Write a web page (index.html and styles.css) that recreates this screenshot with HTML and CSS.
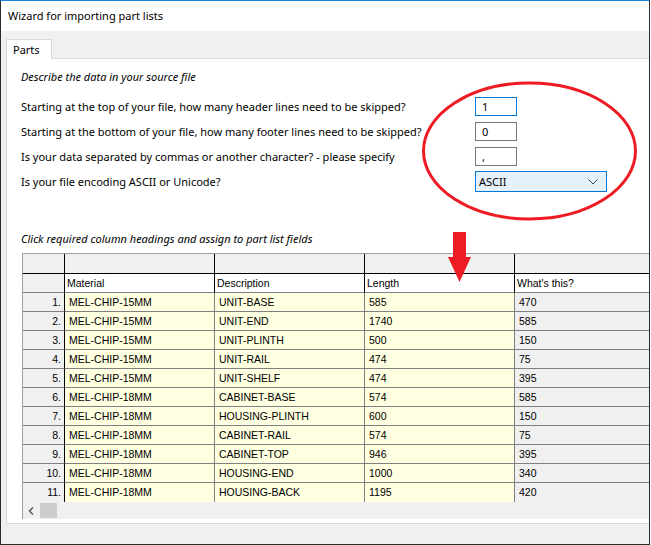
FILE: index.html
```html
<!DOCTYPE html>
<html>
<head>
<meta charset="utf-8">
<title>Wizard for importing part lists</title>
<link rel="stylesheet" href="styles.css">
</head>
<body>
<div class="window">
  <div class="titlebar">Wizard for importing part lists</div>
  <div class="client">
    <div class="tabs"><div class="tab">Parts</div></div>
    <div class="panel">
      <div class="section-title">Describe the data in your source file</div>
      <div class="form">
        <div class="label">Starting at the top of your file, how many header lines need to be skipped?</div>
        <div class="field"><div class="textbox focused">1</div></div>
        <div class="label">Starting at the bottom of your file, how many footer lines need to be skipped?</div>
        <div class="field"><div class="textbox">0</div></div>
        <div class="label">Is your data separated by commas or another character? - please specify</div>
        <div class="field"><div class="textbox">,</div></div>
        <div class="label">Is your file encoding ASCII or Unicode?</div>
        <div class="field">
          <div class="select">ASCII
            <svg class="chevron" width="10" height="6" viewBox="0 0 10 6"><polyline points="0.5,0.5 5,5 9.5,0.5" fill="none" stroke="#444" stroke-width="1"/></svg>
          </div>
        </div>
      </div>
      <div class="section-title hint">Click required column headings and assign to part list fields</div>
      <div class="gridview">
        <div class="grid">
          <div class="c rh h1"></div><div class="c h1"></div><div class="c h1"></div><div class="c h1"></div><div class="c h1"></div>
          <div class="c rh h2"></div><div class="c h2">Material</div><div class="c h2">Description</div><div class="c h2">Length</div><div class="c h2">What's this?</div>

          <div class="c rh">1.</div><div class="c y">MEL-CHIP-15MM</div><div class="c y">UNIT-BASE</div><div class="c y">585</div><div class="c g">470</div>
          <div class="c rh">2.</div><div class="c y">MEL-CHIP-15MM</div><div class="c y">UNIT-END</div><div class="c y">1740</div><div class="c g">585</div>
          <div class="c rh">3.</div><div class="c y">MEL-CHIP-15MM</div><div class="c y">UNIT-PLINTH</div><div class="c y">500</div><div class="c g">150</div>
          <div class="c rh">4.</div><div class="c y">MEL-CHIP-15MM</div><div class="c y">UNIT-RAIL</div><div class="c y">474</div><div class="c g">75</div>
          <div class="c rh">5.</div><div class="c y">MEL-CHIP-15MM</div><div class="c y">UNIT-SHELF</div><div class="c y">474</div><div class="c g">395</div>
          <div class="c rh">6.</div><div class="c y">MEL-CHIP-18MM</div><div class="c y">CABINET-BASE</div><div class="c y">574</div><div class="c g">585</div>
          <div class="c rh">7.</div><div class="c y">MEL-CHIP-18MM</div><div class="c y">HOUSING-PLINTH</div><div class="c y">600</div><div class="c g">150</div>
          <div class="c rh">8.</div><div class="c y">MEL-CHIP-18MM</div><div class="c y">CABINET-RAIL</div><div class="c y">574</div><div class="c g">75</div>
          <div class="c rh">9.</div><div class="c y">MEL-CHIP-18MM</div><div class="c y">CABINET-TOP</div><div class="c y">946</div><div class="c g">395</div>
          <div class="c rh">10.</div><div class="c y">MEL-CHIP-18MM</div><div class="c y">HOUSING-END</div><div class="c y">1000</div><div class="c g">340</div>
          <div class="c rh last">11.</div><div class="c y last">MEL-CHIP-18MM</div><div class="c y last">HOUSING-BACK</div><div class="c y last">1195</div><div class="c g last">420</div>
        </div>
        <div class="hscroll">
          <svg class="arrow-left" width="6" height="8" viewBox="0 0 6 8"><polyline points="5,0.5 1.5,4 5,7.5" fill="none" stroke="#606060" stroke-width="1.6"/></svg>
          <div class="thumb"></div>
        </div>
      </div>
    </div>
  </div>
  <svg class="annotations" width="650" height="545" viewBox="0 0 650 545">
    <ellipse cx="529.5" cy="151" rx="106" ry="68" fill="none" stroke="#ed1c24" stroke-width="3"/>
    <polygon points="453,232 466,232 466,257 471,257 459.5,282 448,257 453,257" fill="#ed1c24"/>
  </svg>
</div>
</body>
</html>
```

FILE: styles.css
```css
html, body {
  margin: 0;
  padding: 0;
  background: #ffffff;
}

.window {
  position: relative;
  width: 650px;
  height: 545px;
  box-sizing: border-box;
  border: 1px solid #2b2b2b;
  border-top-color: #1c7ed6;
  background: #f0f0f0;
  overflow: hidden;
  font-family: "Noto Sans", "Liberation Sans", sans-serif;
  font-size: 11px;
  color: #000;
}

.titlebar {
  height: 30px;
  line-height: 30px;
  padding-left: 7px;
  background: #ffffff;
  font-size: 11px;
}

.client {
  padding: 8px 0 0 5px;
}

.tabs {
  display: flex;
  position: relative;
  z-index: 1;
  margin-bottom: -1px;
}

.tab {
  height: 20px;
  line-height: 20px;
  box-sizing: border-box;
  padding: 0 6px;
  width: 46px;
  border: 1px solid #d9d9d9;
  border-bottom: none;
  background: #ffffff;
}

.panel {
  width: 700px;
  height: 466px;
  box-sizing: border-box;
  border: 1px solid #d9d9d9;
  background: #ffffff;
  padding: 10px 0 0 14px;
}

.section-title {
  font-style: italic;
  line-height: 16px;
  height: 16px;
}

.form {
  margin-top: 9px;
  display: grid;
  grid-template-columns: 454px 132px;
  grid-auto-rows: 25px;
  align-items: center;
}

.label {
  line-height: 16px;
}

.field {
  display: flex;
  align-items: center;
}

.textbox {
  width: 42px;
  height: 19px;
  box-sizing: border-box;
  border: 1px solid #7a7a7a;
  padding-left: 6px;
  line-height: 17px;
}

.textbox.focused {
  border-color: #0078d7;
}

.select {
  position: relative;
  width: 132px;
  height: 21px;
  box-sizing: border-box;
  border: 1px solid #0078d7;
  background: #e5f1fb;
  padding-left: 3px;
  line-height: 19px;
}

.chevron {
  position: absolute;
  right: 8px;
  top: 7px;
}

.hint {
  margin-top: 37px;
}

.gridview {
  margin-top: 6px;
  margin-left: 1px;
  border-left: 1px solid #a0a0a0;
  border-top: 1px solid #a0a0a0;
  width: 660px;
  font-family: "Liberation Sans", Arial, sans-serif;
  font-size: 10.5px;
}

.grid {
  display: grid;
  grid-template-columns: 42px 150px 150px 150px 150px;
  grid-template-rows: 20px 19px;
  grid-auto-rows: 19px;
}

.c {
  box-sizing: border-box;
  border-right: 1px solid #808080;
  border-bottom: 1px solid #808080;
  padding-left: 4px;
  line-height: 18px;
  white-space: nowrap;
  overflow: hidden;
}

.h1 {
  background: #f0f0f0;
  border-color: #000;
}

.h2 {
  background: #ffffff;
  border-right-color: #000;
  padding-left: 2px;
}

.rh {
  background: #f0f0f0;
  border-right-color: #000;
  text-align: right;
  padding-left: 0;
  padding-right: 3px;
}

.y {
  background: #ffffe1;
}

.g {
  background: #f0f0f0;
}

.last {
  border-bottom: none;
}

.hscroll {
  height: 17px;
  background: #f0f0f0;
  display: flex;
  align-items: center;
}

.arrow-left {
  margin-left: 5px;
}

.thumb {
  margin-left: 6px;
  width: 17px;
  height: 15px;
  background: #cdcdcd;
}

.annotations {
  position: absolute;
  left: -1px;
  top: -1px;
  pointer-events: none;
}
```
